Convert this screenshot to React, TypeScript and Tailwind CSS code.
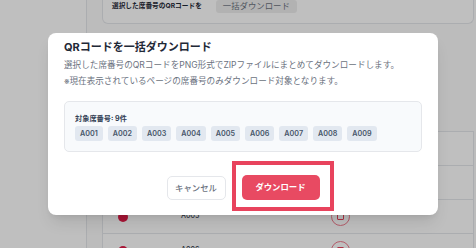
import React from 'react';

const seats = ['A001', 'A002', 'A003', 'A004', 'A005', 'A006', 'A007', 'A008', 'A009'];

const font = "font-['Inter','Noto_Sans_CJK_JP',sans-serif]";

function SeatRow({ id }: { id: string }) {
  return (
    <div className="h-[34px] border-b border-[#e5e7eb] flex items-center">
      <span className="ml-[15px] w-[10px] h-[10px] rounded-full bg-[#e11d48]" />
      <span className="ml-[53px] text-[7px] text-[#374151] font-medium">{id}</span>
      <span className="ml-[132px] w-[19px] h-[19px] rounded-full border border-[#f07b8d] flex items-center justify-center">
        <span className="w-[7px] h-[7px] border border-[#e8435d] rounded-[1px]" />
      </span>
    </div>
  );
}

export default function App() {
  return (
    <div className={`relative w-[476px] h-[248px] overflow-hidden bg-[#fbfbfb] flex ${font}`}>
      {/* page behind the dialog */}
      <aside className="w-[87px] shrink-0 bg-white border-r border-[#e5e7eb]" />
      <main className="flex-1 pl-[15px] pr-[2px]">
        <div className="h-[24px] border-x border-b border-[#e5e7eb] rounded-b-[6px] bg-white flex items-start pl-[9px]">
          <span className="mt-[2px] text-[6.7px] leading-[9px] font-bold text-[#1f2937]">選択した席番号のQRコードを</span>
          <span className="ml-[14px] h-[13px] px-[7px] rounded-[3px] bg-[#eeeeee] text-[8.4px] leading-[13px] text-[#6b7280]">一括ダウンロード</span>
        </div>
        <div className="mt-[107px] border-x border-t border-[#e5e7eb] bg-white">
          <SeatRow id="A003" />
          <SeatRow id="A004" />
          <SeatRow id="A005" />
          <SeatRow id="A006" />
        </div>
      </main>

      {/* overlay */}
      <div className="absolute inset-0 bg-black/25" />

      {/* dialog */}
      <div className="absolute left-[48px] top-[33px] w-[390px] h-[182px] bg-white rounded-[8px] shadow-lg px-[16px] pt-[7px]">
        <h2 className="text-[11px] leading-[15px] font-bold text-[#1f2937]">QRコードを一括ダウンロード</h2>
        <div className="mt-[2px] text-[8.6px] leading-[16px] text-[#6b7280]">
          <p>選択した席番号のQRコードをPNG形式でZIPファイルにまとめてダウンロードします。</p>
          <p>※現在表示されているページの席番号のみダウンロード対象となります。</p>
        </div>
        <div className="mt-[12px] border border-[#e5e7eb] bg-[#f8fafc] rounded-[5px] px-[10px] pt-[12px] pb-[10px]">
          <p className="text-[7.2px] leading-[10px] font-bold text-[#334155]">対象席番号: 9件</p>
          <div className="mt-[2px] flex gap-[5px]">
            {seats.map((s) => (
              <span key={s} className="h-[15px] px-[5px] rounded-[3px] bg-[#e2e8f0] text-[7.2px] leading-[15px] font-semibold text-[#475569]">
                {s}
              </span>
            ))}
          </div>
        </div>
        <div className="mt-[24px] flex justify-center items-start gap-[16px]">
          <button className="h-[24px] w-[59px] border border-[#e5e7eb] rounded-[5px] bg-white text-[8.4px] font-medium text-[#6b7280]">
            キャンセル
          </button>
          <button className="h-[25px] w-[78px] -mt-[1px] rounded-[5px] bg-[#e84a62] text-[8.4px] font-bold text-white">
            ダウンロード
          </button>
        </div>
      </div>

      {/* annotation frame */}
      <div className="absolute left-[232px] top-[161px] w-[102px] h-[50px] border-[4px] border-[#e8435d]" />
    </div>
  );
}
